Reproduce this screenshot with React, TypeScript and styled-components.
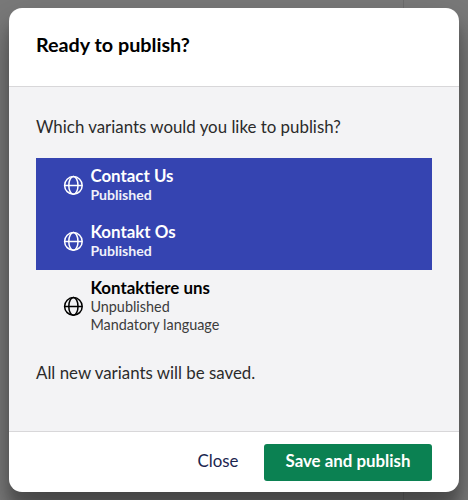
import React from 'react';
import styled, { createGlobalStyle } from 'styled-components';

const GlobalStyle = createGlobalStyle`
  *, *::before, *::after { box-sizing: border-box; }
  html, body { margin: 0; padding: 0; }
  body { font-family: Lato, "Open Sans", sans-serif; font-size: 16.87px; color: #2b2b2b; overflow: hidden; }
`;

const Backdrop = styled.div`
  height: 500px;
  width: 468px;
  padding: 8px 9px;
  overflow: hidden;
  background: linear-gradient(90deg, transparent 403px, #6c6c6c 403px, #6c6c6c 404px, transparent 404px), #797979;
`;

const Dialog = styled.section`
  display: flex;
  flex-direction: column;
  height: 484px;
  background: #fff;
  border-radius: 13px;
  overflow: hidden;
  box-shadow: 0 19px 38px rgba(0, 0, 0, 0.3), 0 15px 12px rgba(0, 0, 0, 0.22);
`;

const Header = styled.header`
  height: 79px;
  padding: 24px 27px 0;
  border-bottom: 1px solid #d8d7d9;
`;

const Title = styled.h3`
  margin: 0;
  font-size: 19.75px;
  line-height: 26px;
  font-weight: 700;
  color: #000;
`;

const Body = styled.div`
  flex: 1;
  padding: 28px 27px 0;
  background: #f3f3f5;
`;

const Text = styled.p`
  margin: 0;
  line-height: 24px;
`;

const Variants = styled.div`
  margin: 19px 0 18px;
`;

const Variant = styled.div<{ $selected?: boolean; $tall?: boolean }>`
  display: flex;
  align-items: center;
  height: ${(p) => (p.$tall ? 73 : 56)}px;
  padding: 0 0 ${(p) => (p.$tall ? 1 : 2)}px 27px;
  background: ${(p) => (p.$selected ? '#3544b1' : 'transparent')};
  color: ${(p) => (p.$selected ? '#fff' : '#000')};
`;

const VariantText = styled.div`
  display: flex;
  flex-direction: column;
  margin-left: 7.4px;
`;

const Name = styled.div`
  font-size: 16.9px;
  line-height: 20px;
  font-weight: 700;
`;

const State = styled.div<{ $selected?: boolean }>`
  font-size: ${(p) => (p.$selected ? 14.1 : 14.4)}px;
  line-height: 18px;
  color: ${(p) => (p.$selected ? '#f0f1fa' : '#3c3c3c')};
  font-weight: ${(p) => (p.$selected ? 700 : 400)};
`;

const Footer = styled.footer`
  display: flex;
  align-items: center;
  justify-content: flex-end;
  height: 61px;
  padding: 0 27px 0 0;
  border-top: 1px solid #d8d7d9;
`;

const Button = styled.button<{ $primary?: boolean }>`
  height: 37px;
  width: ${(p) => (p.$primary ? 168 : 92)}px;
  padding: 0 0 2px;
  border: 0;
  border-radius: 3px;
  font: inherit;
  line-height: 24px;
  font-weight: ${(p) => (p.$primary ? 700 : 400)};
  color: ${(p) => (p.$primary ? '#fff' : '#1b264f')};
  background: ${(p) => (p.$primary ? '#0b8152' : 'transparent')};
`;

const Icon = styled.svg`
  flex: none;
  width: 20px;
  height: 20px;
  fill: none;
  stroke: currentColor;
  stroke-width: 1.5;
`;

const Globe = () => (
  <Icon viewBox="0 0 20 20">
    <circle cx="10.4" cy="10.4" r="8.8" />
    <ellipse cx="10.4" cy="10.4" rx="4.6" ry="8.8" />
    <path d="M1.6 10.4h17.6" />
  </Icon>
);

const variants = [
  { name: 'Contact Us', states: ['Published'], selected: true },
  { name: 'Kontakt Os', states: ['Published'], selected: true },
  { name: 'Kontaktiere uns', states: ['Unpublished', 'Mandatory language'], selected: false },
];

export default function App() {
  return (
    <>
      <GlobalStyle />
      <Backdrop>
        <Dialog>
          <Header>
            <Title>Ready to publish?</Title>
          </Header>
          <Body>
            <Text>Which variants would you like to publish?</Text>
            <Variants>
              {variants.map((v) => (
                <Variant key={v.name} $selected={v.selected} $tall={v.states.length > 1}>
                  <Globe />
                  <VariantText>
                    <Name>{v.name}</Name>
                    {v.states.map((s) => (
                      <State key={s} $selected={v.selected}>{s}</State>
                    ))}
                  </VariantText>
                </Variant>
              ))}
            </Variants>
            <Text>All new variants will be saved.</Text>
          </Body>
          <Footer>
            <Button>Close</Button>
            <Button $primary>Save and publish</Button>
          </Footer>
        </Dialog>
      </Backdrop>
    </>
  );
}
